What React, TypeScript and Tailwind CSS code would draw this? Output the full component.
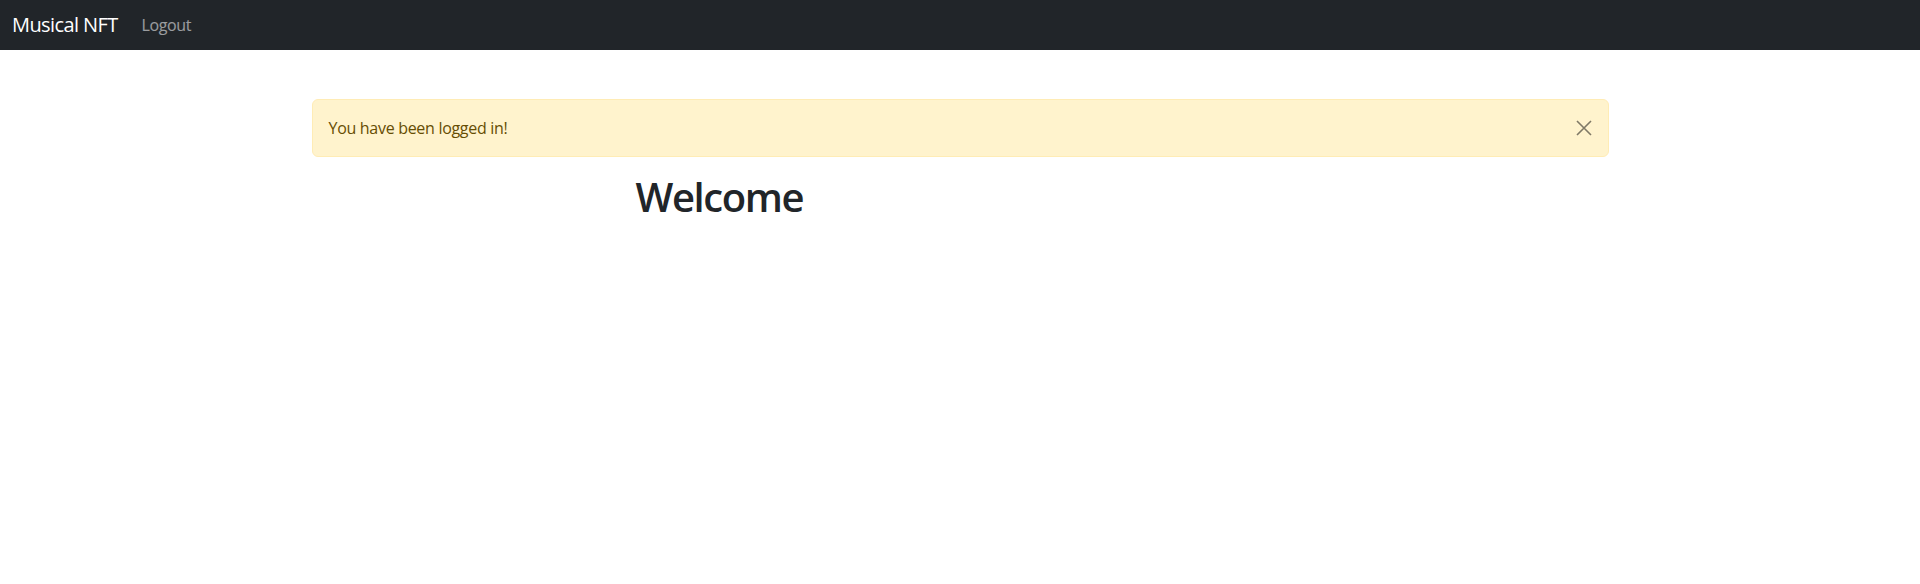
import React, { useState } from 'react';

const font = { fontFamily: '"Open Sans", "Noto Sans", Arial, sans-serif' };

export default function App() {
  const [showAlert, setShowAlert] = useState(true);

  return (
    <div className="min-h-[584px] bg-white" style={font}>
      {/* Navbar */}
      <nav className="h-[50px] bg-[#212529] flex items-center px-3">
        <a href="#" className="text-[20px] leading-[30px] text-white mr-4 tracking-[-0.6px]">
          Musical NFT
        </a>
        <a href="#" className="px-2 text-[16px] leading-6 text-white/55 tracking-[-0.4px]">
          Logout
        </a>
      </nav>

      {/* Content */}
      <main className="w-[1297px] mx-auto pt-[49px]">
        {showAlert && (
          <div className="relative h-[58px] mb-4 border border-[#ffecb5] bg-[#fff3cd] text-[#664d03] rounded-md px-4 py-4 text-[16px] leading-6">
            <span className="tracking-[-0.3px]">You have been logged in!</span>
            <button
              onClick={() => setShowAlert(false)}
              className="absolute right-4 top-5 w-4 h-4 flex items-center justify-center text-black/50"
              aria-label="Close"
            >
              <svg viewBox="0 0 16 16" className="w-4 h-4" fill="none" stroke="currentColor" strokeWidth="1.6">
                <path d="M1 1L15 15M15 1L1 15" />
              </svg>
            </button>
          </div>
        )}
        <h1 className="pl-[324px] mt-[3px] text-[40px] leading-[48px] font-semibold text-[#212529] tracking-[-1.4px]">
          Welcome
        </h1>
      </main>
    </div>
  );
}
